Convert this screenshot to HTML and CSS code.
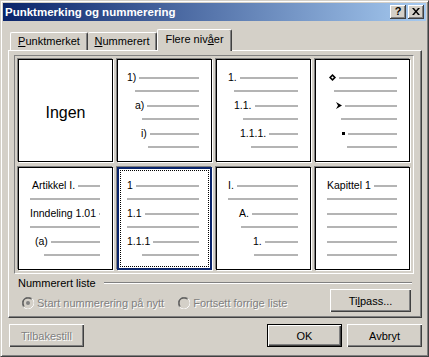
FILE: index.html
```html
<!DOCTYPE html>
<html lang="no">
<head>
<meta charset="utf-8">
<title>Punktmerking og nummerering</title>
<link rel="stylesheet" href="styles.css">
</head>
<body>
<div class="window">
  <div class="titlebar">
    <span class="title">Punktmerking og nummerering</span>
    <div class="tbtns">
      <span class="tbtn help">?</span>
      <span class="tbtn close"><svg width="8" height="7" viewBox="0 0 8 7"><path d="M0 0h2l2 2.5L6 0h2L5 3.5 8 7H6L4 4.5 2 7H0l3-3.5z" fill="#000"/></svg></span>
    </div>
  </div>

  <div class="tabs">
    <div class="tab t1"><u>P</u>unktmerket</div>
    <div class="tab t2"><u>N</u>ummerert</div>
    <div class="tab active">Flere niv<u>å</u>er</div>
  </div>

  <div class="panel">
    <div class="grid">
      <div class="cell none">Ingen</div>

      <div class="cell">
        <div class="lvl"><div class="row"><span class="tx m9">1)</span><i class="ln"></i></div><div class="row2"><i class="ln m17"></i></div></div>
        <div class="lvl"><div class="row"><span class="tx m17">a)</span><i class="ln"></i></div><div class="row2"><i class="ln m24"></i></div></div>
        <div class="lvl"><div class="row"><span class="tx m23">i)</span><i class="ln"></i></div><div class="row2"><i class="ln m30"></i></div></div>
      </div>

      <div class="cell">
        <div class="lvl"><div class="row"><span class="tx m11">1.</span><i class="ln"></i></div><div class="row2"><i class="ln m17"></i></div></div>
        <div class="lvl"><div class="row"><span class="tx m17">1.1.</span><i class="ln"></i></div><div class="row2"><i class="ln m26"></i></div></div>
        <div class="lvl"><div class="row"><span class="tx m23">1.1.1.</span><i class="ln"></i></div><div class="row2"><i class="ln m34"></i></div></div>
      </div>

      <div class="cell">
        <div class="lvl"><div class="row"><svg class="sym m13" width="7" height="7" viewBox="0 0 7 7"><path d="M3.5 0L7 3.5 3.5 7 0 3.5Z" fill="#000"/><path d="M3.5 2.2L4.8 3.5 3.5 4.8 2.2 3.5Z" fill="#fff"/></svg><i class="ln"></i></div><div class="row2"><i class="ln m18"></i></div></div>
        <div class="lvl"><div class="row"><svg class="sym m20" width="6" height="7" viewBox="0 0 6 7"><path d="M0 0L6 3.5 0 7 2 3.5Z" fill="#000"/></svg><i class="ln"></i></div><div class="row2"><i class="ln m25"></i></div></div>
        <div class="lvl"><div class="row"><span class="sq m26"></span><i class="ln"></i></div><div class="row2"><i class="ln m31"></i></div></div>
      </div>

      <div class="cell">
        <div class="lvl"><div class="row"><span class="tx m13">Artikkel I.</span><i class="ln"></i></div><div class="row2"><i class="ln m11"></i></div></div>
        <div class="lvl"><div class="row"><span class="tx m11">Inndeling 1.01</span><i class="ln"></i></div><div class="row2"><i class="ln m11"></i></div></div>
        <div class="lvl"><div class="row"><span class="tx m16">(a)</span><i class="ln"></i></div><div class="row2"><i class="ln m25"></i></div></div>
      </div>

      <div class="cell selected">
        <div class="lvl"><div class="row"><span class="tx m8">1</span><i class="ln"></i></div><div class="row2"><i class="ln m8"></i></div></div>
        <div class="lvl"><div class="row"><span class="tx m8">1.1</span><i class="ln"></i></div><div class="row2"><i class="ln m8"></i></div></div>
        <div class="lvl"><div class="row"><span class="tx m8">1.1.1</span><i class="ln"></i></div><div class="row2"><i class="ln m23"></i></div></div>
      </div>

      <div class="cell">
        <div class="lvl"><div class="row"><span class="tx m11">I.</span><i class="ln"></i></div><div class="row2"><i class="ln m11"></i></div></div>
        <div class="lvl"><div class="row"><span class="tx m22">A.</span><i class="ln"></i></div><div class="row2"><i class="ln m24"></i></div></div>
        <div class="lvl"><div class="row"><span class="tx m36">1.</span><i class="ln"></i></div><div class="row2"><i class="ln m37"></i></div></div>
      </div>

      <div class="cell">
        <div class="lvl"><div class="row"><span class="tx m11">Kapittel 1</span><i class="ln"></i></div><div class="row2"><i class="ln m11"></i></div></div>
        <div class="lvl"><div class="row"><i class="ln m11"></i></div><div class="row2"><i class="ln m11"></i></div></div>
        <div class="lvl"><div class="row"><i class="ln m11"></i></div><div class="row2"><i class="ln m11"></i></div></div>
      </div>
    </div>

    <div class="group-label"><span>Nummerert liste</span><i class="groove"></i></div>

    <div class="options">
      <label class="radio r1">
        <svg width="12" height="12" viewBox="0 0 12 12"><path d="M10.24 1.76A6 6 0 0 0 1.76 10.24" stroke="#808080" fill="none" stroke-width="1"/><path d="M1.76 10.24A6 6 0 0 0 10.24 1.76" stroke="#fff" fill="none" stroke-width="1"/><path d="M9.54 2.46A5 5 0 0 0 2.46 9.54" stroke="#404040" fill="none" stroke-width="1"/><path d="M2.46 9.54A5 5 0 0 0 9.54 2.46" stroke="#d4d0c8" fill="none" stroke-width="1"/><circle cx="6" cy="6" r="4" fill="#d4d0c8"/><circle cx="6" cy="6" r="2" fill="#808080"/></svg>
        <span class="dis">Start nummerering på nytt</span>
      </label>
      <label class="radio r2">
        <svg width="12" height="12" viewBox="0 0 12 12"><path d="M10.24 1.76A6 6 0 0 0 1.76 10.24" stroke="#808080" fill="none" stroke-width="1"/><path d="M1.76 10.24A6 6 0 0 0 10.24 1.76" stroke="#fff" fill="none" stroke-width="1"/><path d="M9.54 2.46A5 5 0 0 0 2.46 9.54" stroke="#404040" fill="none" stroke-width="1"/><path d="M2.46 9.54A5 5 0 0 0 9.54 2.46" stroke="#d4d0c8" fill="none" stroke-width="1"/><circle cx="6" cy="6" r="4" fill="#d4d0c8"/></svg>
        <span class="dis">Fortsett forrige liste</span>
      </label>
      <button class="btn tilpass" type="button">Ti<u>l</u>pass...</button>
    </div>
  </div>

  <div class="footer">
    <button class="btn" type="button"><span class="dis">Tilbakestill</span></button>
    <span class="spacer"></span>
    <button class="btn default" type="button">OK</button>
    <button class="btn" type="button">Avbryt</button>
  </div>
</div>
</body>
</html>
```

FILE: styles.css
```css
* { box-sizing: border-box; }

html, body {
  margin: 0;
  padding: 0;
  background: #d4d0c8;
}

body {
  font-family: "Liberation Sans", Arial, sans-serif;
  font-size: 11px;
  color: #000;
}

.window {
  width: 429px;
  height: 357px;
  border: 1px solid;
  border-color: #d4d0c8 #404040 #404040 #d4d0c8;
  padding: 2px;
  box-shadow: inset 1px 1px #fff, inset -1px -1px #808080;
  display: flex;
  flex-direction: column;
}

/* Title bar */
.titlebar {
  height: 18px;
  background: linear-gradient(to right, #0a246a, #a6caf0);
  display: flex;
  align-items: center;
  padding: 0 2px 0 2px;
}

.title {
  color: #fff;
  font-weight: bold;
  font-size: 11.5px;
  flex: 1;
  white-space: nowrap;
}

.tbtns {
  display: flex;
  gap: 2px;
}

.tbtn {
  width: 16px;
  height: 14px;
  background: #d4d0c8;
  box-shadow: inset -1px -1px #404040, inset 1px 1px #fff, inset -2px -2px #808080;
  display: flex;
  align-items: center;
  justify-content: center;
  font-weight: bold;
  font-size: 11px;
  line-height: 1;
}

.tbtn.help { padding-bottom: 1px; }
.tbtn.close svg { display: block; margin-top: -1px; }

/* Tabs */
.tabs {
  display: flex;
  align-items: flex-end;
  height: 21px;
  margin-top: 8px;
  padding-left: 7px;
  position: relative;
  z-index: 1;
}

.tab {
  height: 18px;
  border-top: 1px solid #fff;
  border-left: 1px solid #fff;
  border-right: 1px solid #404040;
  box-shadow: inset -1px 0 #808080;
  border-radius: 2px 2px 0 0;
  display: flex;
  align-items: center;
  justify-content: center;
  white-space: nowrap;
  padding-bottom: 1px;
}

.tab.t1 { width: 78px; }
.tab.t2 { width: 69px; border-left: none; }

.tab.active {
  width: 75px;
  height: 22px;
  margin-bottom: -1px;
  background: #d4d0c8;
  padding-bottom: 3px;
}

/* Panel */
.panel {
  margin-left: 5px;
  width: 414px;
  height: 268px;
  border: 1px solid;
  border-color: #fff #404040 #404040 #fff;
  box-shadow: inset -1px -1px #808080;
  padding: 4px 0 0 5px;
}

.grid {
  width: 400px;
  border: 1px solid;
  border-color: #808080 #fff #fff #808080;
  padding: 3px;
  display: grid;
  grid-template-columns: repeat(4, 95px);
  grid-auto-rows: 103px;
  column-gap: 4px;
  row-gap: 5px;
}

.cell {
  background: #fff;
  border: 1px solid #000;
  box-shadow: 1px 1px #fff, -1px -1px #808080;
  padding: 11px 12px 0 0;
  font-size: 10.5px;
  position: relative;
}

.cell.none {
  display: flex;
  align-items: center;
  justify-content: center;
  font-size: 16px;
  padding: 5px 0 0 0;
}

.cell.selected {
  border: 2px solid #0a246a;
  padding: 10px 11px 0 0;
}

.cell.selected::after {
  content: "";
  position: absolute;
  inset: 1px;
  border: 1px dotted #000;
}

.lvl {
  height: 28px;
  display: flex;
  flex-direction: column;
}

.row {
  height: 13px;
  display: flex;
  align-items: center;
}

.row2 {
  height: 15px;
  display: flex;
  align-items: center;
  padding-bottom: 2px;
}

.tx {
  white-space: nowrap;
  line-height: 13px;
  margin-right: 3px;
}

.ln {
  flex: 1;
  height: 2px;
  background: #b4b4b4;
  margin-top: 1px;
}

.sym {
  display: block;
  flex: none;
  margin-right: 3px;
}

.sq {
  width: 3px;
  height: 3px;
  background: #000;
  flex: none;
  margin-right: 3px;
}

.m8 { margin-left: 8px; }
.m9 { margin-left: 9px; }
.m11 { margin-left: 11px; }
.m13 { margin-left: 13px; }
.m16 { margin-left: 16px; }
.m17 { margin-left: 17px; }
.m18 { margin-left: 18px; }
.m20 { margin-left: 20px; }
.m22 { margin-left: 22px; }
.m23 { margin-left: 23px; }
.m24 { margin-left: 24px; }
.m25 { margin-left: 25px; }
.m26 { margin-left: 26px; }
.m30 { margin-left: 30px; }
.m31 { margin-left: 31px; }
.m34 { margin-left: 34px; }
.m36 { margin-left: 36px; }
.m37 { margin-left: 37px; }

/* Group */
.group-label {
  display: flex;
  align-items: center;
  height: 13px;
  margin: 2px 0 0 4px;
  width: 394px;
}

.group-label span {
  white-space: nowrap;
  margin-right: 8px;
}

.groove {
  flex: 1;
  height: 2px;
  border-top: 1px solid #808080;
  border-bottom: 1px solid #fff;
}

.options {
  display: flex;
  align-items: center;
  height: 23px;
  margin-top: 0;
  padding-left: 8px;
}

.radio {
  display: flex;
  align-items: center;
  gap: 3px;
  margin-top: 4px;
}

.radio svg { display: block; }

.r2 { margin-left: 14px; }

.dis {
  color: #808080;
  text-shadow: 1px 1px #fff;
}

.btn {
  font-family: "Liberation Sans", Arial, sans-serif;
  font-size: 11px;
  width: 75px;
  height: 23px;
  background: #d4d0c8;
  border: none;
  padding: 0;
  margin: 0;
  color: #000;
  box-shadow: inset 1px 1px #fff, inset -1px -1px #404040, inset -2px -2px #808080;
}

.btn.tilpass {
  width: 81px;
  margin-left: auto;
  margin-right: 10px;
}

.btn.default {
  border: 1px solid #000;
}

.footer {
  display: flex;
  margin-top: 6px;
  padding: 0 4px 0 6px;
  gap: 5px;
}

.spacer { flex: 1; }
```
